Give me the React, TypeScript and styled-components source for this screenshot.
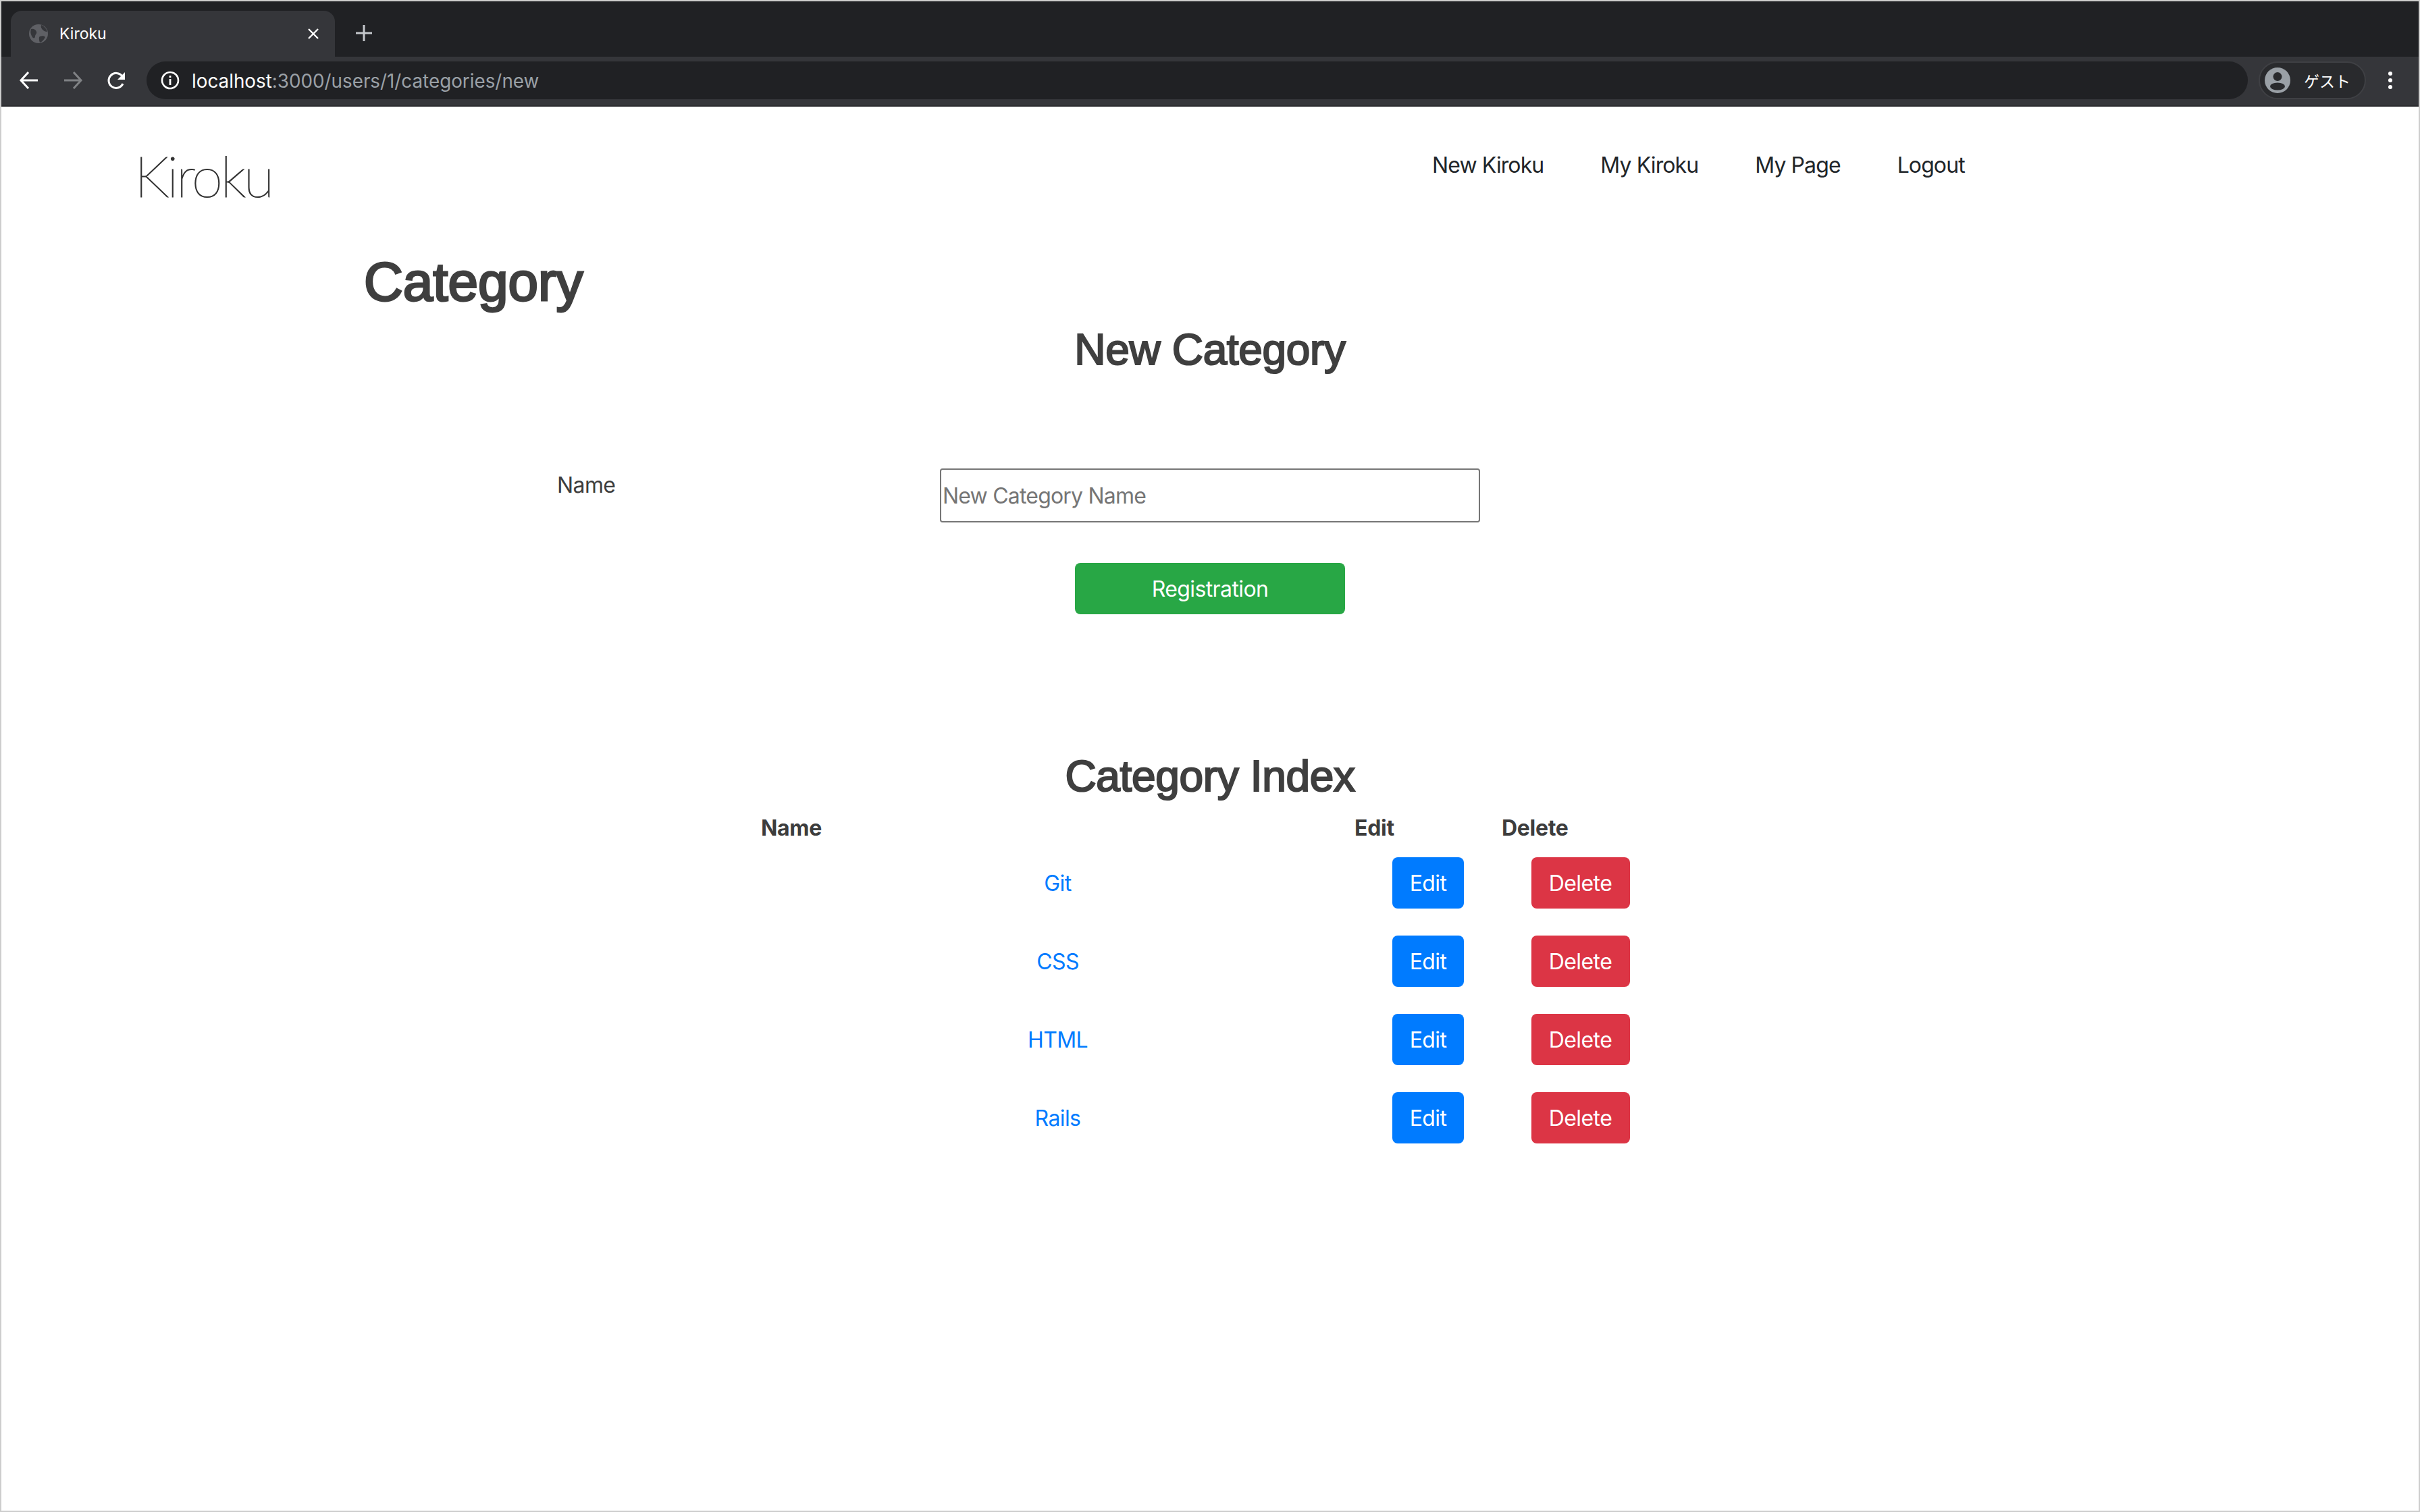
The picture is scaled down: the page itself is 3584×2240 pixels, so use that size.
import React from 'react';
import styled, { createGlobalStyle } from 'styled-components';

const Global = createGlobalStyle`
  html, body { margin: 0; padding: 0; background: #fff; }
  body { font-family: Inter, "Noto Sans CJK JP", sans-serif; color: #3d3d3d; letter-spacing: -0.6px; }
  * { box-sizing: border-box; }
`;

const Frame = styled.div`
  width: 3584px;
  height: 2240px;
  border: 2px solid #cdcdcd;
  background: #fff;
  overflow: hidden;
  display: flex;
  flex-direction: column;
`;

const TabStrip = styled.div`
  height: 82px;
  background: #202124;
  display: flex;
  align-items: flex-end;
  padding-left: 14px;
`;
const Tab = styled.div`
  width: 480px;
  height: 68px;
  background: #35363a;
  border-radius: 16px 16px 0 0;
  display: flex;
  align-items: center;
  padding: 0 23px 0 26px;
  color: #fff;
  font-size: 23px;
  letter-spacing: 0;
`;
const TabTitle = styled.span`
  margin-left: 16px;
  flex: 1;
`;
const NewTab = styled.div`
  margin: 0 0 11px 30px;
  height: 48px;
  display: flex;
  align-items: center;
`;
const Toolbar = styled.div`
  height: 74px;
  background: #35363a;
  border-bottom: 2px solid #2a2b2e;
  display: flex;
  align-items: center;
  padding: 0 0 2px 26px;
`;
const NavIcons = styled.div`
  display: flex;
  align-items: center;
  gap: 35px;
  width: 189px;
`;
const Omnibox = styled.div`
  flex: 1;
  height: 56px;
  border-radius: 28px;
  background: #202124;
  display: flex;
  align-items: center;
  padding-left: 21px;
  font-size: 27.8px;
  letter-spacing: 0;
  color: #fff;
`;
const Host = styled.span`
  margin-left: 18px;
  margin-top: 1px;
`;
const UrlRest = styled.span`
  color: #9aa0a6;
`;
const Profile = styled.div`
  margin-left: 16px;
  width: 159px;
  height: 56px;
  border-radius: 28px;
  border: 2px solid #3f4044;
  background: #292a2d;
  display: flex;
  align-items: center;
  padding-left: 7px;
  color: #fff;
  font-family: "Noto Sans CJK JP", sans-serif;
  font-size: 23px;
  letter-spacing: 0;
  gap: 20px;
`;
const Dots = styled.div`
  width: 78px;
  display: flex;
  justify-content: center;
  padding-right: 7px;
`;

const Page = styled.div`
  flex: 1;
  display: flex;
  flex-direction: column;
`;
const Header = styled.header`
  height: 212px;
  display: flex;
  align-items: flex-start;
  padding-left: 197px;
`;
const Logo = styled.div`
  margin-top: 52px;
  width: 1922px;
  font-family: Lato, sans-serif;
  font-weight: 100;
  font-size: 84px;
  letter-spacing: -3.4px;
  line-height: 100px;
  color: #333;
  -webkit-text-stroke: 1.1px #333;
`;
const Nav = styled.nav`
  display: flex;
  gap: 84px;
  margin-top: 65px;
`;
const NavLink = styled.a`
  font-size: 32px;
  line-height: 44px;
  letter-spacing: -0.9px;
  color: #212529;
`;
const Main = styled.main`
  width: 2504px;
  margin: 0 auto;
`;
const Title = styled.h1`
  margin: 0 0 0 -1px;
  font-family: "Liberation Sans", sans-serif;
  font-weight: 400;
  font-size: 80px;
  letter-spacing: 0;
  line-height: 96px;
  color: #3f3f3f;
  -webkit-text-stroke: 3px #3f3f3f;
`;
const Heading = styled.h2<{ $top: number }>`
  margin: ${p => p.$top}px 0 0;
  text-align: center;
  font-family: "Liberation Sans", sans-serif;
  font-weight: 400;
  font-size: 64px;
  letter-spacing: -0.35px;
  line-height: 78px;
  color: #3f3f3f;
  -webkit-text-stroke: 2.2px #3f3f3f;
`;
const FormRow = styled.div`
  margin: 137px 0 0 285px;
  display: flex;
  align-items: flex-start;
`;
const Label = styled.label`
  width: 567px;
  font-size: 32px;
  line-height: 50px;
`;
const NameInput = styled.input`
  width: 800px;
  height: 80px;
  border: 2px solid #767676;
  border-radius: 4px;
  padding: 0 2px;
  font-family: Inter, sans-serif;
  font-size: 32px;
  letter-spacing: -0.8px;
  &::placeholder { color: #757575; opacity: 1; }
`;
const Center = styled.div`
  display: flex;
  justify-content: center;
  margin-top: 60px;
`;
const Button = styled.a<{ $bg: string; $w: number }>`
  display: flex;
  align-items: center;
  justify-content: center;
  width: ${p => p.$w}px;
  height: 76px;
  border-radius: 8px;
  background: ${p => p.$bg};
  color: #fff;
  font-size: 32px;
`;
const Table = styled.table`
  width: 1330px;
  margin: 13px auto 0;
  border-collapse: collapse;
  table-layout: fixed;
`;
const Th = styled.th`
  text-align: left;
  padding: 0;
  height: 48px;
  font-size: 32px;
  font-weight: 700;
  letter-spacing: -0.3px;
  color: #3d3d3d;
`;
const Td = styled.td`
  padding: 0;
  height: 116px;
  text-align: center;
`;
const CellButton = styled.div`
  display: flex;
  justify-content: center;
`;
const CategoryLink = styled.a`
  font-size: 32px;
  color: #007bff;
`;

const Globe = () => (
  <svg width="30" height="30" viewBox="0 0 30 30">
    <circle cx="15" cy="15" r="14" fill="#5f6065" />
    <path d="M4 8c4-1 7 1 8 4s-2 4-2 7-3 3-4 1-4-6-2-12zM19 2c3 1 8 5 9 10-3 0-5-1-7-3s-3-5-2-7zM17 19c3-1 7-1 8 1-2 4-5 7-8 8-1-3-2-8 0-9z" fill="#35363a" />
  </svg>
);
const Close = () => (
  <svg width="18" height="18" viewBox="0 0 18 18"><path d="M2 2l14 14M16 2L2 16" stroke="#fff" strokeWidth="2.4" /></svg>
);
const Plus = () => (
  <svg width="26" height="26" viewBox="0 0 26 26"><path d="M13 1v24M1 13h24" stroke="#c4c7cb" strokeWidth="3" /></svg>
);
const Arrow = ({ color, flip }: { color: string; flip?: boolean }) => (
  <svg width="30" height="28" viewBox="0 0 30 28" style={flip ? { transform: 'scaleX(-1)' } : undefined}>
    <path d="M28 14H3M14 2L3 14l11 12" fill="none" stroke={color} strokeWidth="3" />
  </svg>
);
const Reload = () => (
  <svg width="30" height="30" viewBox="0 0 30 30">
    <path d="M24 20a11 11 0 1 1-1-11" fill="none" stroke="#fff" strokeWidth="3" />
    <path d="M27 3v11H16z" fill="#fff" />
  </svg>
);
const Info = () => (
  <svg width="28" height="28" viewBox="0 0 28 28">
    <circle cx="14" cy="14" r="12" fill="none" stroke="#fff" strokeWidth="2.6" />
    <path d="M12.6 12h2.8v9h-2.8zM12.6 7h2.8v3h-2.8z" fill="#fff" />
  </svg>
);
const Avatar = () => (
  <svg width="38" height="38" viewBox="0 0 38 38">
    <circle cx="19" cy="19" r="19" fill="#9aa0a6" />
    <circle cx="19" cy="13.5" r="6.5" fill="#292a2d" />
    <ellipse cx="19" cy="28" rx="11" ry="5.5" fill="#292a2d" />
  </svg>
);
const Kebab = () => (
  <svg width="8" height="28" viewBox="0 0 8 28" fill="#fff">
    <circle cx="4" cy="4" r="3" /><circle cx="4" cy="14" r="3" /><circle cx="4" cy="24" r="3" />
  </svg>
);

const categories = ['Git', 'CSS', 'HTML', 'Rails'];

export default function App() {
  return (
    <Frame>
      <Global />
      <TabStrip>
        <Tab>
          <Globe />
          <TabTitle>Kiroku</TabTitle>
          <Close />
        </Tab>
        <NewTab><Plus /></NewTab>
      </TabStrip>
      <Toolbar>
        <NavIcons>
          <Arrow color="#fff" />
          <Arrow color="#808285" flip />
          <Reload />
        </NavIcons>
        <Omnibox>
          <Info />
          <Host>localhost<UrlRest>:3000/users/1/categories/new</UrlRest></Host>
        </Omnibox>
        <Profile>
          <Avatar />
          <span>ゲスト</span>
        </Profile>
        <Dots><Kebab /></Dots>
      </Toolbar>
      <Page>
        <Header>
          <Logo>Kiroku</Logo>
          <Nav>
            <NavLink>New Kiroku</NavLink>
            <NavLink>My Kiroku</NavLink>
            <NavLink>My Page</NavLink>
            <NavLink>Logout</NavLink>
          </Nav>
        </Header>
        <Main>
          <Title>Category</Title>
          <Heading $top={13}>New Category</Heading>
          <FormRow>
            <Label>Name</Label>
            <NameInput placeholder="New Category Name" />
          </FormRow>
          <Center>
            <Button $bg="#28a745" $w={400}>Registration</Button>
          </Center>
          <Heading $top={201}>Category Index</Heading>
          <Table>
            <colgroup>
              <col style={{ width: 879 }} />
              <col style={{ width: 218 }} />
              <col style={{ width: 233 }} />
            </colgroup>
            <thead>
              <tr><Th>Name</Th><Th>Edit</Th><Th>Delete</Th></tr>
            </thead>
            <tbody>
              {categories.map(c => (
                <tr key={c}>
                  <Td><CategoryLink>{c}</CategoryLink></Td>
                  <Td><CellButton><Button $bg="#007bff" $w={106}>Edit</Button></CellButton></Td>
                  <Td><CellButton><Button $bg="#dc3545" $w={146}>Delete</Button></CellButton></Td>
                </tr>
              ))}
            </tbody>
          </Table>
        </Main>
      </Page>
    </Frame>
  );
}
